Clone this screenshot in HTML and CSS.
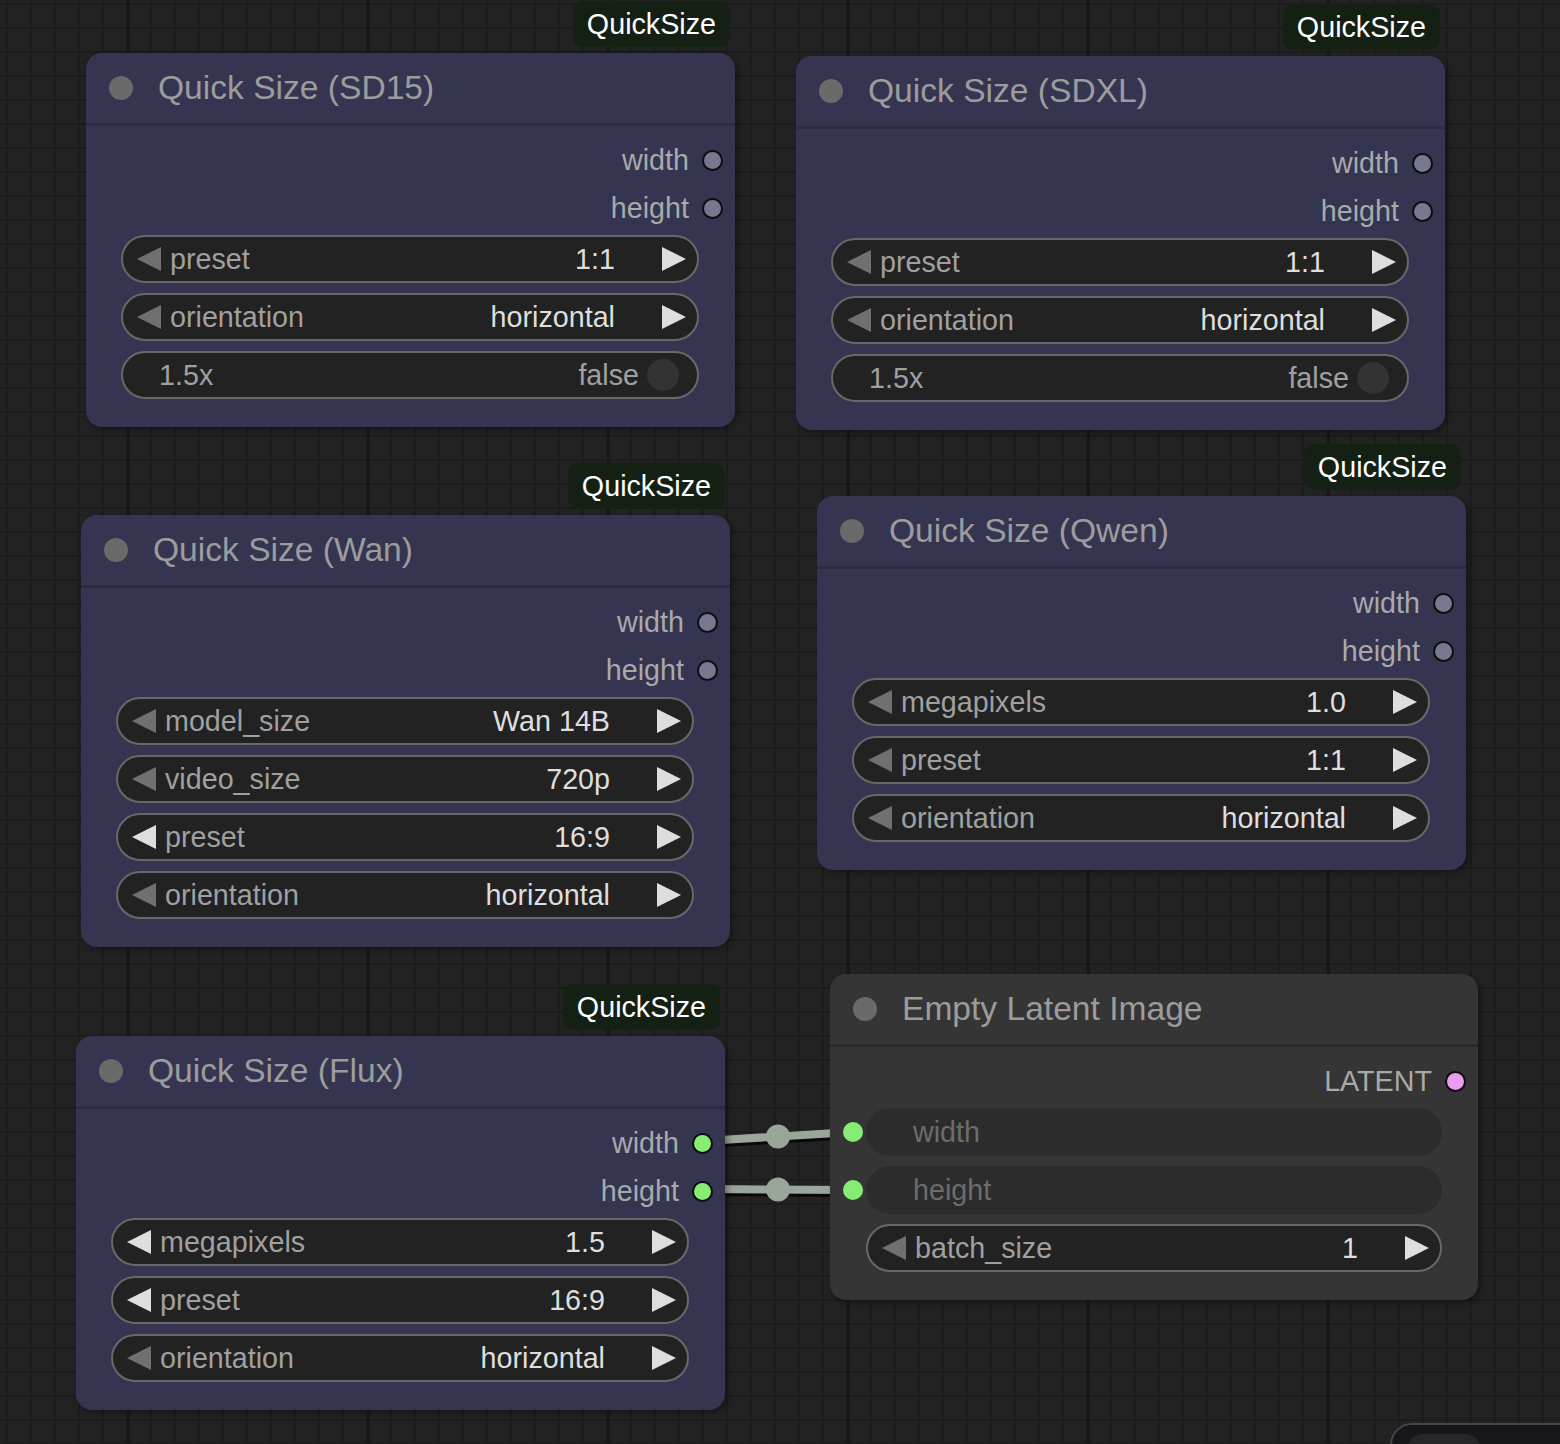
FILE: index.html
```html
<!DOCTYPE html>
<html lang="en">
<head>
<meta charset="utf-8">
<title>Quick Size nodes</title>
<link rel="stylesheet" href="styles.css">
</head>
<body>
<main class="canvas">
  <svg class="links" width="1560" height="1444" viewBox="0 0 1560 1444">
    <g class="link-shadow">
      <line x1="704" y1="1143" x2="853" y2="1134"/>
      <line x1="704" y1="1191" x2="853" y2="1192"/>
    </g>
    <g class="link">
      <line x1="704" y1="1141" x2="853" y2="1132"/>
      <line x1="704" y1="1189" x2="853" y2="1190"/>
      <circle cx="778" cy="1136.5" r="12"/>
      <circle cx="778" cy="1189.5" r="12"/>
    </g>
  </svg>

  <section class="node blue n-sd15">
    <div class="badge">QuickSize</div>
    <header class="title"><span class="dot"></span><span class="title-text">Quick Size (SD15)</span></header>
    <div class="body">
      <div class="slot-out"><span>width</span><i class="pin"></i></div>
      <div class="slot-out"><span>height</span><i class="pin"></i></div>
      <div class="widgets">
        <div class="combo"><i class="arr left dim"></i><span class="label">preset</span><span class="value">1:1</span><i class="arr right"></i></div>
        <div class="combo"><i class="arr left dim"></i><span class="label">orientation</span><span class="value">horizontal</span><i class="arr right"></i></div>
        <div class="toggle"><span class="label">1.5x</span><span class="tval">false</span><i class="knob"></i></div>
      </div>
    </div>
  </section>

  <section class="node blue n-sdxl">
    <div class="badge">QuickSize</div>
    <header class="title"><span class="dot"></span><span class="title-text">Quick Size (SDXL)</span></header>
    <div class="body">
      <div class="slot-out"><span>width</span><i class="pin"></i></div>
      <div class="slot-out"><span>height</span><i class="pin"></i></div>
      <div class="widgets">
        <div class="combo"><i class="arr left dim"></i><span class="label">preset</span><span class="value">1:1</span><i class="arr right"></i></div>
        <div class="combo"><i class="arr left dim"></i><span class="label">orientation</span><span class="value">horizontal</span><i class="arr right"></i></div>
        <div class="toggle"><span class="label">1.5x</span><span class="tval">false</span><i class="knob"></i></div>
      </div>
    </div>
  </section>

  <section class="node blue n-wan">
    <div class="badge">QuickSize</div>
    <header class="title"><span class="dot"></span><span class="title-text">Quick Size (Wan)</span></header>
    <div class="body">
      <div class="slot-out"><span>width</span><i class="pin"></i></div>
      <div class="slot-out"><span>height</span><i class="pin"></i></div>
      <div class="widgets">
        <div class="combo"><i class="arr left dim"></i><span class="label">model_size</span><span class="value">Wan 14B</span><i class="arr right"></i></div>
        <div class="combo"><i class="arr left dim"></i><span class="label">video_size</span><span class="value">720p</span><i class="arr right"></i></div>
        <div class="combo"><i class="arr left"></i><span class="label">preset</span><span class="value">16:9</span><i class="arr right"></i></div>
        <div class="combo"><i class="arr left dim"></i><span class="label">orientation</span><span class="value">horizontal</span><i class="arr right"></i></div>
      </div>
    </div>
  </section>

  <section class="node blue n-qwen">
    <div class="badge">QuickSize</div>
    <header class="title"><span class="dot"></span><span class="title-text">Quick Size (Qwen)</span></header>
    <div class="body">
      <div class="slot-out"><span>width</span><i class="pin"></i></div>
      <div class="slot-out"><span>height</span><i class="pin"></i></div>
      <div class="widgets">
        <div class="combo"><i class="arr left dim"></i><span class="label">megapixels</span><span class="value">1.0</span><i class="arr right"></i></div>
        <div class="combo"><i class="arr left dim"></i><span class="label">preset</span><span class="value">1:1</span><i class="arr right"></i></div>
        <div class="combo"><i class="arr left dim"></i><span class="label">orientation</span><span class="value">horizontal</span><i class="arr right"></i></div>
      </div>
    </div>
  </section>

  <section class="node blue n-flux">
    <div class="badge">QuickSize</div>
    <header class="title"><span class="dot"></span><span class="title-text">Quick Size (Flux)</span></header>
    <div class="body">
      <div class="slot-out"><span>width</span><i class="pin linked"></i></div>
      <div class="slot-out"><span>height</span><i class="pin linked"></i></div>
      <div class="widgets">
        <div class="combo"><i class="arr left"></i><span class="label">megapixels</span><span class="value">1.5</span><i class="arr right"></i></div>
        <div class="combo"><i class="arr left"></i><span class="label">preset</span><span class="value">16:9</span><i class="arr right"></i></div>
        <div class="combo"><i class="arr left dim"></i><span class="label">orientation</span><span class="value">horizontal</span><i class="arr right"></i></div>
      </div>
    </div>
  </section>

  <section class="node gray n-latent">
    <header class="title"><span class="dot"></span><span class="title-text">Empty Latent Image</span></header>
    <div class="body">
      <div class="slot-out"><span>LATENT</span><i class="pin latent"></i></div>
      <div class="widgets">
        <div class="input-field"><i class="in-pin"></i><span class="label">width</span></div>
        <div class="input-field"><i class="in-pin"></i><span class="label">height</span></div>
        <div class="combo"><i class="arr left dim"></i><span class="label">batch_size</span><span class="value">1</span><i class="arr right"></i></div>
      </div>
    </div>
  </section>

  <aside class="dock"><span class="dock-item"></span></aside>
</main>
</body>
</html>
```

FILE: styles.css
```css
* { box-sizing: border-box; }

html, body {
  margin: 0;
  padding: 0;
  width: 1560px;
  height: 1444px;
  overflow: hidden;
}

body {
  font-family: "Liberation Sans", Arial, Helvetica, sans-serif;
  background: #222;
}

/* graph canvas with a minor 24px grid and heavier 240px columns */
.canvas {
  position: relative;
  width: 1560px;
  height: 1444px;
  background-color: #222222;
  background-image:
    linear-gradient(to right, #181818 3px, transparent 3px),
    linear-gradient(to right, #1c1c1c 2px, transparent 2px),
    linear-gradient(to bottom, #1c1c1c 2px, transparent 2px);
  background-size: 240px 100%, 24px 100%, 100% 24px;
  background-position: 127px 0, 6px 0, 0 3px;
  overflow: hidden;
}

/* links between slots */
.links {
  position: absolute;
  left: 0;
  top: 0;
  z-index: 0;
}
.link-shadow line {
  stroke: rgba(0, 0, 0, 0.75);
  stroke-width: 10;
}
.link line {
  stroke: #9aa69a;
  stroke-width: 8;
}
.link circle {
  fill: #9aa69a;
}

/* nodes */
.node {
  position: absolute;
  z-index: 1;
  width: 649px;
  border-radius: 16px;
  box-shadow: 3px 3px 6px rgba(0, 0, 0, 0.35);
}
.node.blue { background: #353552; }
.node.gray { background: #353535; }

.n-sd15 { left: 86px; top: 53px; }
.n-sdxl { left: 796px; top: 56px; }
.n-wan { left: 81px; top: 515px; }
.n-qwen { left: 817px; top: 496px; }
.n-flux { left: 76px; top: 1036px; }
.n-latent { left: 830px; top: 974px; width: 648px; }

.badge {
  position: absolute;
  right: 5px;
  bottom: calc(100% + 6px);
  height: 46px;
  padding: 0 14px;
  display: flex;
  align-items: center;
  background: #142014;
  color: #ffffff;
  font-size: 28.7px;
  border-radius: 10px;
}

.title {
  height: 73px;
  display: flex;
  align-items: center;
  padding-left: 23px;
  border-bottom: 3px solid #2b2b43;
}
.gray .title { border-bottom-color: #2a2a2a; }

.dot {
  width: 24px;
  height: 24px;
  border-radius: 50%;
  background: #6a6a6a;
  margin-right: 25px;
  flex: none;
}
.title-text {
  color: #9c9c9c;
  font-size: 33.6px;
  white-space: nowrap;
}

.body {
  padding: 10px 0 28px;
}

.slot-out {
  height: 48px;
  display: flex;
  align-items: center;
  justify-content: flex-end;
  padding-right: 12px;
  color: #a9a9a9;
  font-size: 28.7px;
}
.pin {
  width: 21px;
  height: 21px;
  border-radius: 50%;
  background: #787690;
  border: 2.5px solid #0d0d0d;
  margin-left: 13px;
}
.pin.linked { background: #86ec74; }
.pin.latent { background: #ec9cee; }

.widgets {
  margin-top: 3px;
  padding: 0 36px 0 35px;
  display: flex;
  flex-direction: column;
  gap: 10px;
}
.gray .widgets { padding: 0 36px; }

.combo, .toggle, .input-field {
  position: relative;
  height: 48px;
  border-radius: 24px;
  display: flex;
  align-items: center;
  font-size: 28.7px;
  white-space: nowrap;
}
.combo, .toggle {
  background: #222222;
  border: 2px solid #686868;
}
.combo { padding: 0 11px 0 14px; }
.toggle { padding: 0 18px 0 36px; }

.label {
  flex: 1;
  color: #a0a0a0;
}
.combo .label { margin-left: 9px; }

.value {
  color: #dedede;
  margin-right: 47px;
}

.arr {
  width: 0;
  height: 0;
  border-top: 12px solid transparent;
  border-bottom: 12px solid transparent;
  flex: none;
}
.arr.left { border-right: 24px solid #dedede; }
.arr.left.dim { border-right-color: #707070; }
.arr.right { border-left: 24px solid #dedede; }

.tval { color: #a0a0a0; }
.knob {
  width: 32px;
  height: 32px;
  border-radius: 50%;
  background: #333333;
  margin-left: 8px;
}

/* inputs converted to sockets */
.input-field {
  background: #2c2c2c;
  padding-left: 47px;
}
.input-field .label { color: #6c6c6c; }
.in-pin {
  position: absolute;
  left: -23px;
  top: 14px;
  width: 20px;
  height: 20px;
  border-radius: 50%;
  background: #86ec74;
}

/* corner dock */
.dock {
  position: absolute;
  left: 1390px;
  top: 1423px;
  width: 220px;
  height: 60px;
  border-radius: 22px;
  background: #16161b;
  border: 2px solid #45454b;
  z-index: 2;
}
.dock-item {
  position: absolute;
  left: 14px;
  top: 9px;
  width: 76px;
  height: 40px;
  border-radius: 18px;
  background: #27272b;
}
```
